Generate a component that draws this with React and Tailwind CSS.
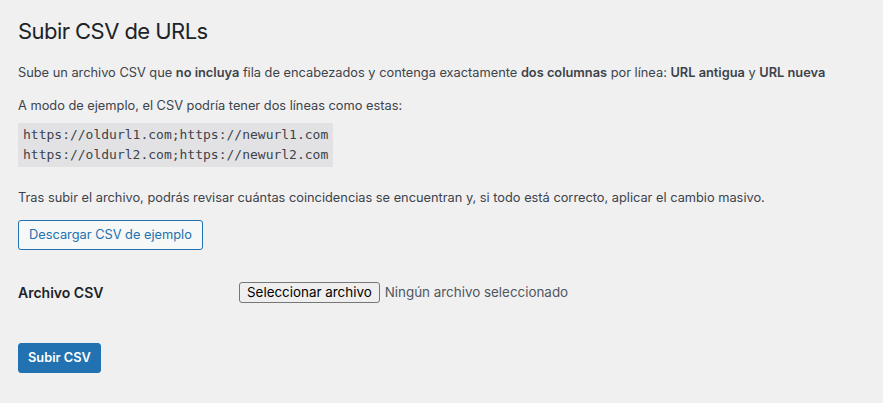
import React from "react";

export default function App() {
  return (
    <div className="min-h-[403px] w-[883px] bg-[#f0f0f1] px-[18px] text-[12.8px] text-[#3c434a] font-['Inter',sans-serif]">
      <h1 className="pt-[16px] text-[22px] font-normal leading-[30px] tracking-[-0.55px] text-[#1d2327]">Subir CSV de URLs</h1>

      <p className="mt-[17px] leading-[19.5px]">
        Sube un archivo CSV que <strong className="font-semibold">no incluya</strong> fila de encabezados y contenga exactamente{" "}
        <strong className="font-semibold">dos columnas</strong> por línea: <strong className="font-semibold">URL antigua</strong> y{" "}
        <strong className="font-semibold">URL nueva</strong>
      </p>

      <p className="mt-[13px] leading-[19.5px]">A modo de ejemplo, el CSV podría tener dos líneas como estas:</p>

      <pre className="mt-[8px] inline-block bg-[#dcdcde]/70 px-[5px] py-[2px] font-['DejaVu_Sans_Mono',monospace] text-[13px] leading-[20px] text-[#3c434a]">
        {"https://oldurl1.com;https://newurl1.com\nhttps://oldurl2.com;https://newurl2.com"}
      </pre>

      <p className="mt-[21px] leading-[19.5px]">
        Tras subir el archivo, podrás revisar cuántas coincidencias se encuentran y, si todo está correcto, aplicar el cambio masivo.
      </p>

      <button className="mt-[12px] h-[30px] rounded-[3px] border border-[#2271b1] bg-[#f6f7f7] px-[10px] text-[12.8px] leading-[28px] text-[#2271b1]">
        Descargar CSV de ejemplo
      </button>

      <div className="mt-[32px] flex h-[22px] items-center">
        <div className="w-[221px] text-[14px] font-semibold text-[#1d2327]">Archivo CSV</div>
        <div className="flex items-center">
          <span className="flex h-[21px] items-center rounded-[3px] border border-[#767676] bg-[#efefef] px-[7px] text-[13.4px] text-black">
            Seleccionar archivo
          </span>
          <span className="ml-[5px] text-[13.4px] text-[#50575e]">Ningún archivo seleccionado</span>
        </div>
      </div>

      <button className="mt-[39px] h-[30px] rounded-[3px] border border-[#2271b1] bg-[#2271b1] px-[9px] text-[12.8px] font-semibold leading-[28px] text-white">
        Subir CSV
      </button>
    </div>
  );
}
